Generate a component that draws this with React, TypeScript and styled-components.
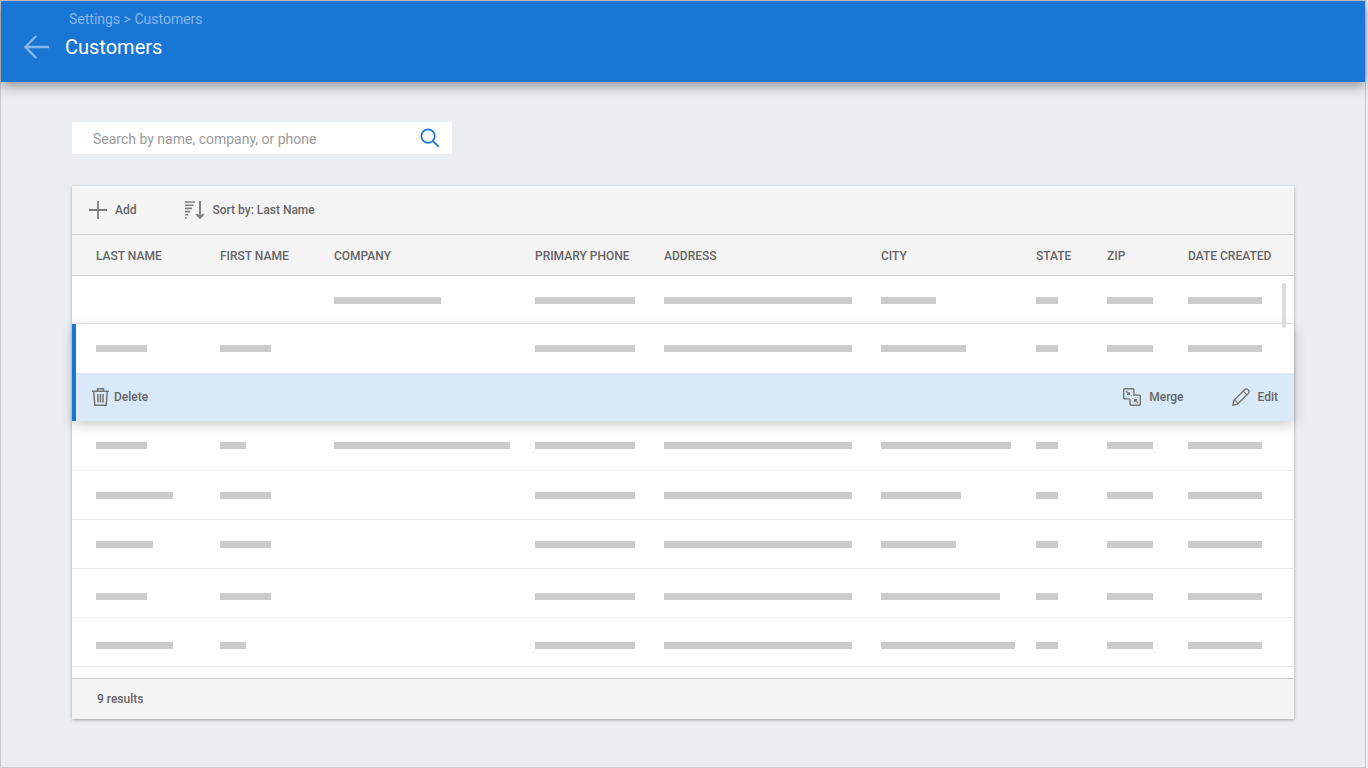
import React from "react";
import styled, { createGlobalStyle, css } from "styled-components";

const GlobalStyle = createGlobalStyle`
  *, *::before, *::after { box-sizing: border-box; }
  body {
    margin: 0;
    background: #eaeef1;
    color: #666;
    font-family: Roboto, "Liberation Sans", sans-serif;
    font-size: 12px;
  }
  button, input { font: inherit; color: inherit; }
`;

const Page = styled.div`
  display: flex;
  flex-direction: column;
  min-height: 100vh;
  margin-right: 2px;
  border: 1px solid #c9ccce;
`;

const Header = styled.header`
  display: flex;
  align-items: flex-end;
  gap: 16px;
  height: 81px;
  padding: 0 22px 23px;
  background: #1976d5;
  color: #fff;
  box-shadow: 0 4px 12px rgba(0, 0, 0, 0.4);
`;

const Heading = styled.div`
  display: flex;
  flex-direction: column;
  gap: 8px;
`;

const Crumbs = styled.nav`
  padding-left: 4px;
  font-size: 14px;
  line-height: 16px;
  color: #86b6e8;

  a { color: inherit; text-decoration: none; }
`;

const Title = styled.h1`
  margin: 0;
  font-size: 20px;
  font-weight: 400;
  line-height: 24px;
`;

const IconButton = styled.button`
  display: flex;
  padding: 0;
  border: 0;
  background: none;
  cursor: pointer;
`;

const Content = styled.main`
  display: flex;
  flex-direction: column;
  gap: 32px;
  padding: 40px 71px 47px;
`;

const Search = styled.form`
  display: flex;
  align-items: center;
  width: 380px;
  max-width: 100%;
  height: 32px;
  padding-right: 12px;
  background: #fff;
`;

const SearchInput = styled.input`
  flex: 1;
  min-width: 0;
  height: 32px;
  padding: 2px 0 0 21px;
  border: 0;
  outline: 0;
  background: none;
  font-size: 14px;

  &::placeholder { color: #9b9b9b; opacity: 1; }
`;

const Card = styled.section`
  background: #fff;
  box-shadow: 0 1px 3px rgba(0, 0, 0, 0.32);
`;

const Toolbar = styled.div`
  display: flex;
  align-items: center;
  gap: 48px;
  height: 49px;
  padding-left: 17px;
  border-bottom: 1px solid #ccc;
  background: #f4f4f4;
`;

const LabelButton = styled.button<{ $gap: number }>`
  display: flex;
  align-items: center;
  gap: ${(p) => p.$gap}px;
  padding: 0;
  border: 0;
  background: none;
  font-weight: 500;
  line-height: 16px;
  cursor: pointer;
`;

const ListArea = styled.div`
  position: relative;
  padding-bottom: 11px;
`;

const ScrollThumb = styled.div`
  position: absolute;
  top: 48px;
  right: 8px;
  z-index: 2;
  width: 4px;
  height: 45px;
  border-radius: 2px;
  background: #dcdcdc;
`;

const Table = styled.table`
  width: 100%;
  table-layout: fixed;
  border-collapse: separate;
  border-spacing: 0;
`;

const HeadCell = styled.th`
  height: 41px;
  padding: 2px 0 0 24px;
  border-bottom: 1px solid #ccc;
  background: #f4f4f4;
  font-weight: 500;
  text-align: left;
  white-space: nowrap;
`;

const Group = styled.tbody<{ $selected?: boolean }>`
  ${(p) =>
    p.$selected &&
    css`
      position: relative;
      z-index: 1;
      box-shadow: 0 4px 12px rgba(0, 0, 0, 0.2);

      && td { border-bottom: 0; background: #fff; }
      && td:first-child { padding-left: 20px; border-left: 4px solid #1976d5; }
    `}
`;

const Row = styled.tr<{ $height: number; $low?: boolean }>`
  height: ${(p) => p.$height}px;

  td {
    padding: ${(p) => (p.$low ? 24 : 21)}px 0 0 24px;
    border-bottom: 1px solid #ebebeb;
    vertical-align: top;
  }
`;

const Bar = styled.div<{ $width: number }>`
  width: ${(p) => p.$width}px;
  height: 7px;
  background: #cbcbcb;
`;

const ActionRow = styled.tr`
  &&& td, &&& td:first-child { padding: 0; background: #d9e9f8; }
`;

const Actions = styled.div`
  display: flex;
  align-items: center;
  gap: 48px;
  height: 48px;
  padding: 0 16px;
`;

const Spacer = styled.span`
  flex: 1;
`;

const Footer = styled.footer`
  height: 41px;
  padding-left: 25px;
  border-top: 1px solid #ccc;
  background: #f4f4f4;
  font-weight: 500;
  line-height: 40px;
`;

const BackIcon = () => (
  <svg width="26" height="26" viewBox="0 0 26 26" fill="none" stroke="#86b6e8" strokeWidth="2.4" aria-hidden="true">
    <path d="M26 14H2.6M13.2 3 2.4 14l10.8 11" />
  </svg>
);

const SearchIcon = () => (
  <svg width="20" height="20" viewBox="0 0 20 20" fill="none" stroke="#1976d5" strokeWidth="1.7" aria-hidden="true">
    <circle cx="8.1" cy="8.1" r="6.7" />
    <path d="m12.8 12.8 6 6" />
  </svg>
);

const PlusIcon = () => (
  <svg width="18" height="18" viewBox="0 0 18 18" stroke="#7d7d7d" strokeWidth="1.8" aria-hidden="true">
    <path d="M9 0v18M0 9h18" />
  </svg>
);

const SortIcon = () => (
  <svg width="20" height="18" viewBox="0 0 20 18" fill="none" stroke="#7d7d7d" strokeWidth="1.6" aria-hidden="true">
    <path d="M1 1h10M1 4.2h8.5M1 7.4h7M1 10.6h5M1 13.8h3.3M1 17h1.6" />
    <path d="M16 0v16.5M12.4 13l3.6 3.8 3.6-3.8" strokeWidth="1.9" />
  </svg>
);

const TrashIcon = () => (
  <svg width="17" height="18" viewBox="0 0 17 18" fill="none" stroke="#757575" strokeWidth="1.5" aria-hidden="true">
    <path d="M0 3.2h17M1.7 3.2l1.1 14h11.4l1.1-14M5.5 3V.8h6V3M5.9 6v8.5M8.5 6v8.5M11.1 6v8.5" />
  </svg>
);

const MergeIcon = () => (
  <svg width="18" height="18" viewBox="0 0 18 18" fill="none" stroke="#757575" strokeWidth="1.4" aria-hidden="true">
    <path d="M7 10.9H1.7a1 1 0 0 1-1-1V1.7a1 1 0 0 1 1-1h8.2a1 1 0 0 1 1 1v5.4h5.4a1 1 0 0 1 1 1v8.2a1 1 0 0 1-1 1H8.1a1 1 0 0 1-1-1v-5.4" />
    <path d="M7.9 7.6h1M9.2 10.4h1" strokeWidth="1" opacity="0.6" />
    <path d="m3 3 3 3M6.4 4v2.4H4M15 15l-3-3M11.6 14v-2.4H14" strokeWidth="1.2" />
  </svg>
);

const PencilIcon = () => (
  <svg width="18" height="18" viewBox="0 0 18 18" fill="none" stroke="#757575" strokeWidth="1.4" strokeLinejoin="round" aria-hidden="true">
    <path d="M.8 17.2 2 12.3 12.8 1.5a2 2 0 0 1 2.9 0l.8.8a2 2 0 0 1 0 2.9L5.7 16Z" />
    <path d="m11.2 3.1 3.7 3.7M2 12.3c1.8.2 3.4 1.8 3.7 3.7" strokeWidth="1.1" />
  </svg>
);

const columns = [
  { label: "LAST NAME", width: 124 },
  { label: "FIRST NAME", width: 114 },
  { label: "COMPANY", width: 201 },
  { label: "PRIMARY PHONE", width: 129 },
  { label: "ADDRESS", width: 217 },
  { label: "CITY", width: 155 },
  { label: "STATE", width: 71 },
  { label: "ZIP", width: 81 },
  { label: "DATE CREATED", width: 130 },
];

type Customer = { bars: number[]; height: number; low?: boolean };

const before: Customer[] = [{ bars: [0, 0, 107, 100, 188, 55, 22, 46, 74], height: 48 }];
const selected: Customer = { bars: [51, 51, 0, 100, 188, 85, 22, 46, 74], height: 49 };
const after: Customer[] = [
  { bars: [51, 26, 176, 100, 188, 130, 22, 46, 74], height: 50 },
  { bars: [77, 51, 0, 100, 188, 80, 22, 46, 74], height: 49 },
  { bars: [57, 51, 0, 100, 188, 75, 22, 46, 74], height: 49 },
  { bars: [51, 51, 0, 100, 188, 119, 22, 46, 74], height: 49, low: true },
  { bars: [77, 26, 0, 100, 188, 134, 22, 46, 74], height: 49, low: true },
];

const CustomerRow = ({ bars, height, low }: Customer) => (
  <Row $height={height} $low={low}>
    {bars.map((width, i) => (
      <td key={columns[i].label}>{width > 0 && <Bar $width={width} />}</td>
    ))}
  </Row>
);

export default function App() {
  return (
    <>
      <GlobalStyle />
      <Page>
        <Header>
          <IconButton type="button" aria-label="Back">
            <BackIcon />
          </IconButton>
          <Heading>
            <Crumbs aria-label="Breadcrumb">
              <a href="#settings">Settings</a> &gt; <a href="#customers">Customers</a>
            </Crumbs>
            <Title>Customers</Title>
          </Heading>
        </Header>
        <Content>
          <Search role="search" onSubmit={(e) => e.preventDefault()}>
            <SearchInput
              type="text"
              aria-label="Search customers"
              placeholder="Search by name, company, or phone"
            />
            <IconButton type="submit" aria-label="Search">
              <SearchIcon />
            </IconButton>
          </Search>
          <Card>
            <Toolbar>
              <LabelButton type="button" $gap={8}>
                <PlusIcon />
                Add
              </LabelButton>
              <LabelButton type="button" $gap={8}>
                <SortIcon />
                Sort by: Last Name
              </LabelButton>
            </Toolbar>
            <ListArea>
              <Table>
                <colgroup>
                  {columns.map((c) => (
                    <col key={c.label} width={c.width} />
                  ))}
                </colgroup>
                <thead>
                  <tr>
                    {columns.map((c) => (
                      <HeadCell key={c.label} scope="col">
                        {c.label}
                      </HeadCell>
                    ))}
                  </tr>
                </thead>
                <Group>
                  {before.map((c, i) => (
                    <CustomerRow key={i} {...c} />
                  ))}
                </Group>
                <Group $selected>
                  <CustomerRow {...selected} />
                  <ActionRow>
                    <td colSpan={columns.length}>
                      <Actions>
                        <LabelButton type="button" $gap={5}>
                          <TrashIcon />
                          Delete
                        </LabelButton>
                        <Spacer />
                        <LabelButton type="button" $gap={8}>
                          <MergeIcon />
                          Merge
                        </LabelButton>
                        <LabelButton type="button" $gap={8}>
                          <PencilIcon />
                          Edit
                        </LabelButton>
                      </Actions>
                    </td>
                  </ActionRow>
                </Group>
                <Group>
                  {after.map((c, i) => (
                    <CustomerRow key={i} {...c} />
                  ))}
                </Group>
              </Table>
              <ScrollThumb />
            </ListArea>
            <Footer>9 results</Footer>
          </Card>
        </Content>
      </Page>
    </>
  );
}
